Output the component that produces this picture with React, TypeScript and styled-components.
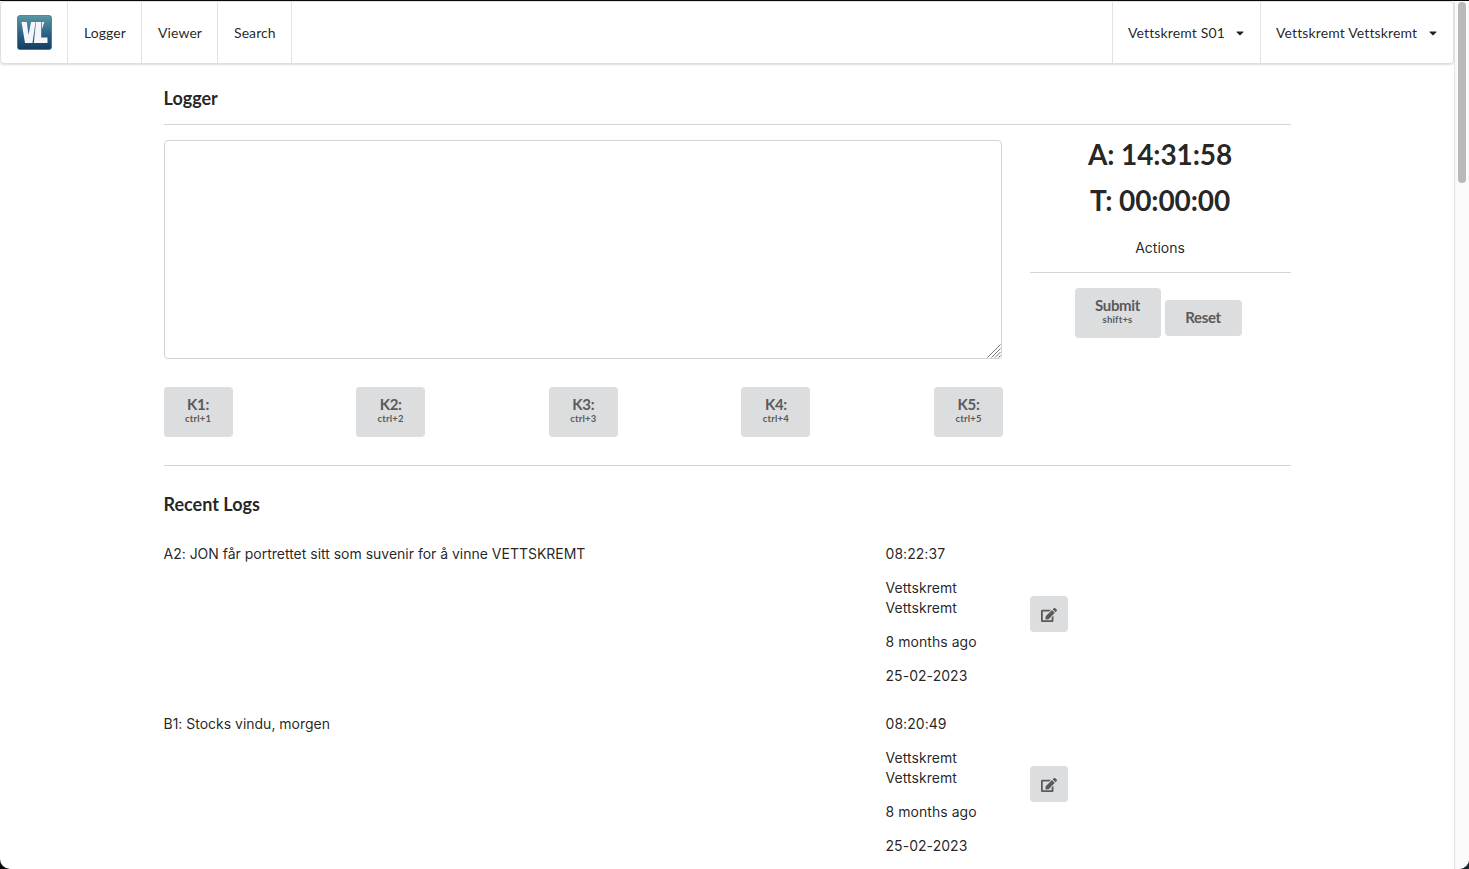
import React from "react";
import styled, { createGlobalStyle } from "styled-components";
import { FaCaretDown, FaEdit } from "react-icons/fa";

const heading = `Lato, "Liberation Sans", sans-serif`;
const ink = "rgba(0, 0, 0, 0.87)";
const line = "#d4d4d5";

const GlobalStyle = createGlobalStyle`
  *, *::before, *::after { box-sizing: border-box; }
  body {
    margin: 0;
    background: #17262b;
    color: ${ink};
    font: 14px/20px Inter, "Liberation Sans", sans-serif;
    -webkit-font-smoothing: antialiased;
  }
  p, h1, h2, h3 { margin: 0; }
`;

const Backdrop = styled.div`
  height: 869px;
  padding-top: 1px;
  overflow: hidden;
  background: linear-gradient(#0b090c 0 50%, transparent 50%),
    linear-gradient(90deg, #08080a 50%, #17262b 50%);
`;

const Window = styled.div`
  display: flex;
  height: 868px;
  background: #fff;
  border-radius: 0 0 10px 10px;
  overflow: hidden;
`;

const Page = styled.div`
  flex: 1;
  min-width: 0;
`;

const ScrollTrack = styled.div`
  width: 15px;
  padding: 1px 3px 0;
  background: #fafafa;
  border-left: 1px solid #e4e4e4;
`;

const ScrollThumb = styled.div`
  width: 8px;
  height: 181px;
  border-radius: 4px;
  background: #b9b9b9;
`;

const Menu = styled.nav`
  display: flex;
  height: 63px;
  border: 1px solid rgba(34, 36, 38, 0.15);
  border-radius: 4px;
  box-shadow: 0 1px 2px 0 rgba(34, 36, 38, 0.15);
  font-family: ${heading};
`;

const MenuItem = styled.a<{ $width: number; $right?: boolean }>`
  display: flex;
  align-items: center;
  width: ${(p) => p.$width}px;
  padding: 0 0 0 16px;
  white-space: nowrap;
  letter-spacing: ${(p) => (p.$right ? 0.14 : 0.08)}px;
  border: 0 solid #e2e2e3;
  ${(p) =>
    p.$right
      ? "border-left-width: 1px; padding: 0 15px; justify-content: space-between;"
      : "border-right-width: 1px;"}
`;

const MenuSpacer = styled.div`
  flex: 1;
`;

const Caret = styled(FaCaretDown)`
  width: 10px;
  height: 12px;
  margin-top: 1px;
`;

const Container = styled.main`
  width: 1127px;
  margin: 23px auto 0 163.5px;
`;

const Title = styled.h3`
  font: 700 18px/23px ${heading};
`;

const Divider = styled.hr<{ $top: number; $bottom: number }>`
  height: 1px;
  border: 0;
  background: ${line};
  margin: ${(p) => p.$top}px 0 ${(p) => p.$bottom}px;
`;

const Columns = styled.div`
  display: grid;
  grid-template-columns: 838.5px 261px;
  column-gap: 28px;
`;

const EditorFrame = styled.div`
  position: relative;
`;

const Editor = styled.textarea`
  display: block;
  width: 100%;
  height: 219px;
  border: 1px solid ${line};
  border-radius: 4px;
  resize: none;
  outline: 0;
`;

const Grip = styled.svg`
  position: absolute;
  right: 1px;
  bottom: 1px;
`;

const KeyRow = styled.div`
  display: flex;
  justify-content: space-between;
  margin: 28px -1px 0 0;
`;

const Button = styled.button<{ $width: number }>`
  width: ${(p) => p.$width}px;
  padding: 10px 0 12px;
  border: 0;
  border-radius: 4px;
  background: #dcddde;
  color: #5a5a5b;
  font: 700 15px/14px ${heading};
  letter-spacing: -0.35px;
  text-align: center;
`;

const Hint = styled.small`
  display: block;
  margin: 1px 0 -1px;
  font-size: 9.5px;
  line-height: 14px;
  letter-spacing: 0.2px;
`;

const Side = styled.aside`
  text-align: center;
`;

const Clock = styled.h1`
  font: 700 28px/36px ${heading};
  letter-spacing: -0.1px;
  margin: -4px 0 14px;
  padding-right: 1px;
`;

const Caption = styled.p`
  margin-top: 16px;
  padding: 4px 1px 0 0;
`;

const Actions = styled.div`
  display: flex;
  justify-content: center;
  align-items: last baseline;
  gap: 4px;
  padding-right: 5px;
`;

const LogList = styled.section`
  margin-top: 28px;
`;

const LogRow = styled.article`
  display: grid;
  grid-template-columns: 694px 116.5px 38px;
  column-gap: 28px;
  height: 142px;
  margin-bottom: 28px;
`;

const LogText = styled.p`
  letter-spacing: -0.01px;
`;

const Meta = styled.div`
  display: flex;
  flex-direction: column;
  gap: 14px;
  letter-spacing: 0.05px;
`;

const EditButton = styled(Button)`
  display: flex;
  justify-content: center;
  align-items: center;
  align-self: center;
  height: 36px;
  margin-top: -2px;
  padding: 12px 0 11px;
  font-size: 16px;
`;

const Logo = () => (
  <svg width="35" height="35" viewBox="0 0 35 35" aria-label="VL">
    <defs>
      <linearGradient id="tile" x1="0" y1="0" x2="0" y2="1">
        <stop offset="0" stopColor="#5b97a3" />
        <stop offset="0.5" stopColor="#2d6687" />
        <stop offset="1" stopColor="#123c61" />
      </linearGradient>
    </defs>
    <rect x="0.5" y="0.5" width="34" height="34" rx="2.5" fill="url(#tile)" stroke="#356a7c" strokeOpacity="0.7" />
    <path d="M4.500 7h5.300l1.700 13L14 7h4.500l-3 21H8z" fill="#f5f4fa" />
    <path d="M19 7h5.200v15.500h6.300V28H16.800z" fill="#f5f4fa" />
    <path d="M25 7h2.300l-2.300 7z" fill="#f5f4fa" />
  </svg>
);

const logs = [
  { text: "A2: JON får portrettet sitt som suvenir for å vinne VETTSKREMT", time: "08:22:37" },
  { text: "B1: Stocks vindu, morgen", time: "08:20:49" },
];

export default function App() {
  return (
    <Backdrop>
      <GlobalStyle />
      <Window>
        <Page>
          <Menu>
            <MenuItem $width={67}><Logo /></MenuItem>
            <MenuItem $width={74}>Logger</MenuItem>
            <MenuItem $width={76}>Viewer</MenuItem>
            <MenuItem $width={74}>Search</MenuItem>
            <MenuSpacer />
            <MenuItem $width={148} $right>Vettskremt S01<Caret /></MenuItem>
            <MenuItem $width={193} $right>Vettskremt Vettskremt<Caret /></MenuItem>
          </Menu>
          <Container>
            <Title>Logger</Title>
            <Divider $top={14} $bottom={15} />
            <Columns>
              <section>
                <EditorFrame>
                  <Editor aria-label="Log entry" />
                  <Grip width="14" height="14" viewBox="0 0 14 14" stroke="#777" strokeWidth="1">
                    <path d="M0.500 13.500L13.500 0.500M4.500 13.500L13.500 4.500M8 13.500L13.500 8M11.500 13.500L13.500 11.500" />
                  </Grip>
                </EditorFrame>
                <KeyRow>
                  {[1, 2, 3, 4, 5].map((n) => (
                    <Button key={n} $width={69}>K{n}:<Hint>ctrl+{n}</Hint></Button>
                  ))}
                </KeyRow>
              </section>
              <Side>
                <Clock>A: 14:31:58</Clock>
                <Clock>T: 00:00:00</Clock>
                <Caption>Actions</Caption>
                <Divider $top={14} $bottom={15} />
                <Actions>
                  <Button $width={86}>Submit<Hint>shift+s</Hint></Button>
                  <Button $width={77}>Reset</Button>
                </Actions>
              </Side>
            </Columns>
            <Divider $top={28} $bottom={27} />
            <Title>Recent Logs</Title>
            <LogList>
              {logs.map((log) => (
                <LogRow key={log.time}>
                  <LogText>{log.text}</LogText>
                  <Meta>
                    <p>{log.time}</p>
                    <p>Vettskremt Vettskremt</p>
                    <p>8 months ago</p>
                    <p>25-02-2023</p>
                  </Meta>
                  <EditButton $width={38} aria-label="Edit"><FaEdit /></EditButton>
                </LogRow>
              ))}
            </LogList>
          </Container>
        </Page>
        <ScrollTrack><ScrollThumb /></ScrollTrack>
      </Window>
    </Backdrop>
  );
}
